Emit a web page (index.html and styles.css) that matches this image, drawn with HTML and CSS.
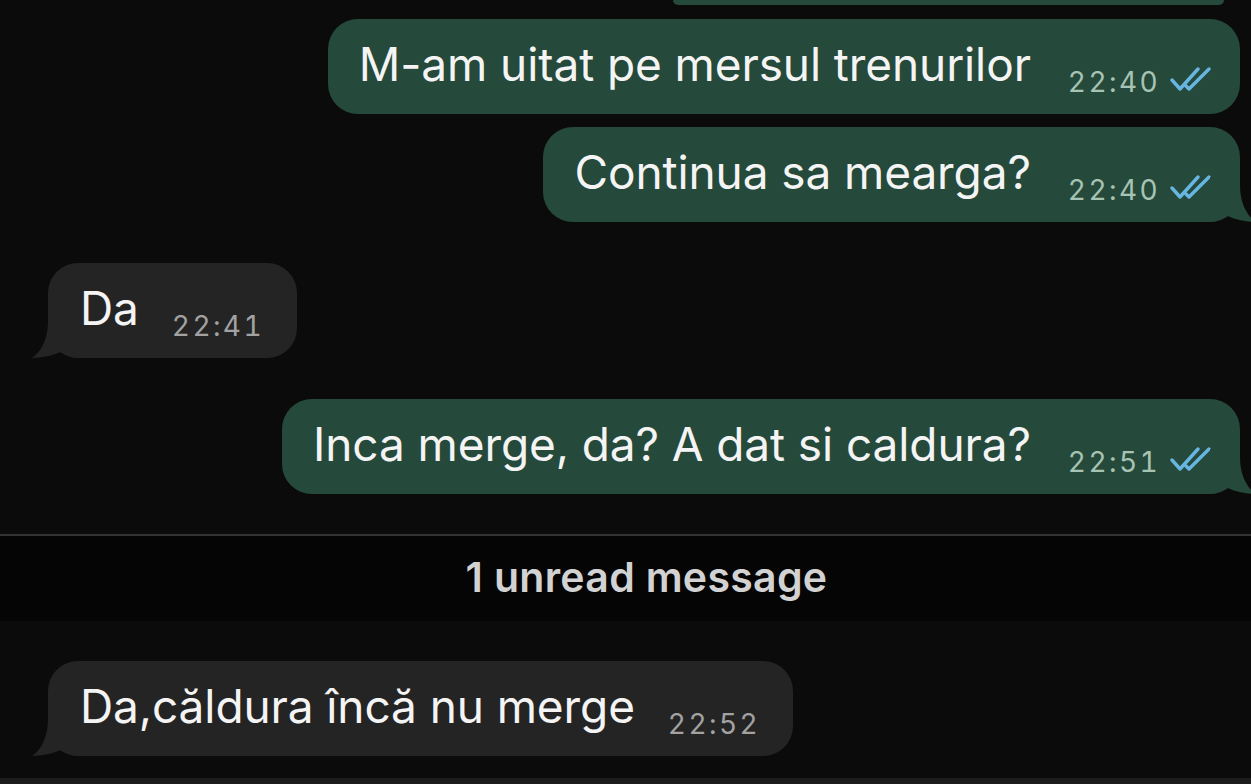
FILE: index.html
```html
<!DOCTYPE html>
<html lang="ro">
<head>
  <meta charset="UTF-8">
  <title>Chat</title>
  <link rel="stylesheet" href="styles.css">
</head>
<body>
  <div class="chat">
    <!-- read messages -->
    <div class="bubble-cut"></div>

    <div class="msg out">
      <span class="text">M-am uitat pe mersul trenurilor</span>
      <span class="time">22:40</span>
      <svg class="ticks" viewBox="0 0 42 26"><path d="M2 14 L10 23 L28 3 M16 20 L19 23 L39 3"/></svg>
    </div>

    <div class="msg out tail gap-sm">
      <span class="text">Continua sa mearga?</span>
      <span class="time">22:40</span>
      <svg class="ticks" viewBox="0 0 42 26"><path d="M2 14 L10 23 L28 3 M16 20 L19 23 L39 3"/></svg>
      <svg class="tail-shape" viewBox="0 0 46 45"><path d="M30 0 L30 8 C30 25 36 38 46 45 C36 45 22 42 16 38 C13 41 8 45 0 45 L0 0 Z"/></svg>
    </div>

    <div class="msg in tail gap-lg">
      <span class="text">Da</span>
      <span class="time">22:41</span>
      <svg class="tail-shape" viewBox="0 0 46 45"><path d="M16 0 L16 8 C16 25 10 38 0 45 C10 45 24 42 30 38 C33 41 38 45 46 45 L46 0 Z"/></svg>
    </div>

    <div class="msg out tail gap-lg">
      <span class="text">Inca merge, da? A dat si caldura?</span>
      <span class="time">22:51</span>
      <svg class="ticks" viewBox="0 0 42 26"><path d="M2 14 L10 23 L28 3 M16 20 L19 23 L39 3"/></svg>
      <svg class="tail-shape" viewBox="0 0 46 45"><path d="M30 0 L30 8 C30 25 36 38 46 45 C36 45 22 42 16 38 C13 41 8 45 0 45 L0 0 Z"/></svg>
    </div>

    <!-- unread -->
    <div class="unread">1 unread message</div>

    <div class="msg in tail gap-lg">
      <span class="text">Da,căldura încă nu merge</span>
      <span class="time">22:52</span>
      <svg class="tail-shape" viewBox="0 0 46 45"><path d="M16 0 L16 8 C16 25 10 38 0 45 C10 45 24 42 30 38 C33 41 38 45 46 45 L46 0 Z"/></svg>
    </div>
  </div>
  <div class="bottom-bar"></div>
</body>
</html>
```

FILE: styles.css
```css
body { margin: 0; background: #0b0b0b; font-family: Inter, "Noto Sans", sans-serif; height: 784px; overflow: hidden; display: flex; flex-direction: column; }
.chat { flex: 1; display: flex; flex-direction: column; }

.bubble-cut { align-self: flex-end; margin-right: 27px; width: 551px; height: 5px; background: #25493a; border-radius: 0 0 6px 6px; }

.msg { position: relative; display: flex; align-items: center; height: 95px; box-sizing: border-box; border-radius: 30px; margin-top: 14px; }
.msg.gap-sm { margin-top: 13px; }
.msg.gap-lg { margin-top: 41px; }
.msg .text { color: #f4f4f4; font-size: 46px; letter-spacing: -0.1px; white-space: nowrap; margin-bottom: 6px; }
.msg .time { font-size: 28px; letter-spacing: 2.4px; font-variant-numeric: tabular-nums; margin-top: 30px; margin-left: 37px; }

.msg.out { align-self: flex-end; margin-right: 11px; background: #25493a; padding: 0 28px 0 31px; }
.msg.out .time { color: #a7c3b3; }
.msg.in { align-self: flex-start; margin-left: 48px; background: #242424; padding: 0 33px 0 32px; }
.msg.in .time { color: #a2a2a2; margin-left: 33px; }

.ticks { width: 42px; height: 26px; margin-left: 10px; margin-top: 25px; fill: none; stroke: #67b6e2; stroke-width: 3.4; stroke-linecap: round; stroke-linejoin: round; }

.tail-shape { position: absolute; bottom: 0; width: 46px; height: 45px; }
.msg.in .tail-shape { left: -16px; fill: #242424; }
.msg.out .tail-shape { right: -16px; fill: #25493a; }

.unread { margin-top: 40px; border-top: 2px solid #333; height: 87px; background: #050505; color: #d2d2d2; font-size: 41px; font-weight: 600; letter-spacing: 0.3px; display: flex; align-items: center; justify-content: center; padding: 0 0 4px 42px; box-sizing: border-box; }
.unread + .msg { margin-top: 40px; }

.bottom-bar { height: 6px; background: #1c1c1c; }
```
